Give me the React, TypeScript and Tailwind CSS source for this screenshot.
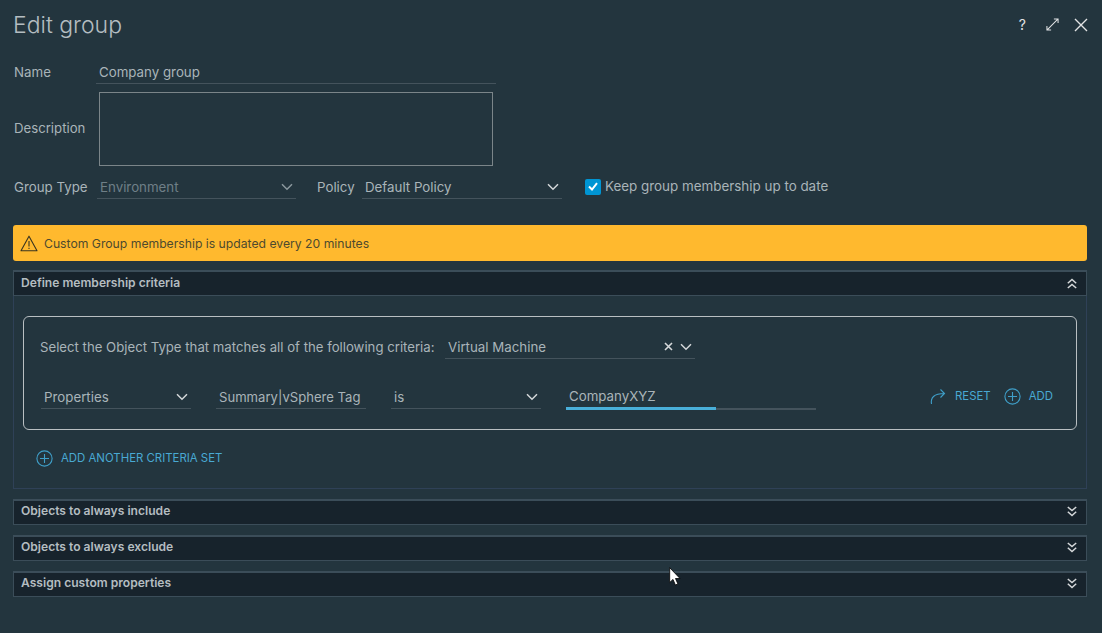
import React from "react";

const font = { fontFamily: 'Inter, sans-serif' };

const Chevron = ({ className = "" }: { className?: string }) => (
  <svg width="12" height="8" viewBox="0 0 12 8" fill="none" stroke="currentColor" strokeWidth="1.5" className={className}>
    <path d="M1 1.2 6 6.2 11 1.2" />
  </svg>
);

const PlusCircle = () => (
  <svg width="17" height="17" viewBox="0 0 17 17" fill="none" stroke="#3f9fc9" strokeWidth="1.1" className="shrink-0">
    <circle cx="8.5" cy="8.5" r="7.6" />
    <path d="M8.5 4v9M4 8.5h9" />
  </svg>
);

const DoubleChevron = ({ up = false }: { up?: boolean }) => (
  <svg width="10" height="11" viewBox="0 0 10 11" fill="none" stroke="#d5d8da" strokeWidth="1.5" style={up ? { transform: "scaleY(-1)" } : undefined}>
    <path d="M.8 1 5 4.6 9.2 1M.8 5.8 5 9.6 9.2 5.8" />
  </svg>
);

const Select = ({ label, width, muted = false, clear = false }: { label: string; width: string; muted?: boolean; clear?: boolean }) => (
  <div className={`flex h-[22px] items-center border-b border-[#44535c] pl-[3px] pr-[3px] ${width}`}>
    <span className={`flex-1 truncate text-[13.3px] ${muted ? "text-[#6f7f87]" : "text-[#a9b4b9]"}`}>{label}</span>
    {clear && (
      <svg width="9" height="9" viewBox="0 0 9 9" fill="none" stroke="#d5d8da" strokeWidth="1.6" className="mb-[2px] mr-[7px]">
        <path d="M1 1 8 8M8 1 1 8" />
      </svg>
    )}
    <Chevron className={`mb-[2px] ${muted ? "text-[#8b989e]" : "text-[#d5d8da]"}`} />
  </div>
);

const SectionHeader = ({ title, up = false }: { title: string; up?: boolean }) => (
  <div className={`flex h-[26px] items-center justify-between border border-t-2 border-[#3b4d59] bg-[#17232c] pl-[7px] pr-[9px] ${up ? "pb-0" : "pb-[2px]"}`}>
    <span className="text-[12.1px] font-semibold text-[#b4bdc1]">{title}</span>
    <DoubleChevron up={up} />
  </div>
);

export default function App() {
  return (
    <div style={font} className="relative h-[633px] w-[1102px] overflow-hidden bg-[#23353e] pl-[13px] pr-[15px] text-[#a9b4b9]">
      {/* title bar */}
      <div className="flex h-[50px] items-center justify-between">
        <h1 className="text-[23px] font-light text-[#b4bdc1]">Edit group</h1>
        <div className="mr-[-1px] flex items-center text-[#e2e4e5]">
          <span className="mb-[1px] text-[14px] leading-none">?</span>
          <svg width="13" height="13" viewBox="0 0 14 14" fill="none" stroke="currentColor" strokeWidth="1.1" className="ml-[20px] mb-[1px]">
            <path d="M1 13 13 1M8.5 1H13V5.5M1 8.5V13H5.5" />
          </svg>
          <svg width="14" height="14" viewBox="0 0 14 14" fill="none" stroke="currentColor" strokeWidth="1.4" className="ml-[15px]">
            <path d="M1 1 13 13M13 1 1 13" />
          </svg>
        </div>
      </div>

      {/* name */}
      <div className="mt-[12px] flex h-[22px] items-center">
        <label className="w-[83px] pl-[1px] text-[13.3px]">Name</label>
        <div className="flex h-[22px] w-[400px] items-center border-b border-[#44535c] pl-[3px] text-[13.3px]">Company group</div>
      </div>

      {/* description */}
      <div className="mt-[8px] flex h-[74px] items-center">
        <label className="w-[86px] pl-[1px] text-[13.2px]">Description</label>
        <div className="h-[74px] w-[394px] border border-[#7b8589]" />
      </div>

      {/* type + policy */}
      <div className="mt-[11px] flex h-[22px] items-center">
        <label className="w-[84px] pl-[1px] text-[13.3px]">Group Type</label>
        <Select label="Environment" width="w-[199px]" muted />
        <label className="ml-[21px] w-[45px] text-[13.3px]">Policy</label>
        <Select label="Default Policy" width="w-[200px]" />
        <div className="ml-[23px] flex items-center gap-[4px] pb-[3px]">
          <span className="flex h-[16px] w-[16px] items-center justify-center rounded-[2px] bg-[#0095d3]">
            <svg width="10" height="9" viewBox="0 0 10 9" fill="none" stroke="#fff" strokeWidth="2">
              <path d="M1 4.5 4 7.5 9 1.2" />
            </svg>
          </span>
          <span className="text-[13.4px]">Keep group membership up to date</span>
        </div>
      </div>

      {/* alert */}
      <div className="mt-[26px] flex h-[36px] items-center gap-[6px] rounded-[3px] bg-[#ffb92e] pl-[7px] text-[12.2px] text-[#4d4a2e]">
        <svg width="18" height="17" viewBox="0 0 18 17" fill="none" stroke="#3a3520" strokeWidth="1.1">
          <path d="M9 1.2 17 15.8H1Z" strokeLinejoin="round" />
          <path d="M9 6v5.5M9 12.8v1.2" />
        </svg>
        <span className="mt-[2px]">Custom Group membership is updated every 20 minutes</span>
      </div>

      {/* membership criteria */}
      <div className="mt-[9px]">
        <SectionHeader title="Define membership criteria" up />
        <div className="h-[193px] border border-t-0 border-[#2f4157] px-[9px] pt-[20px]">
          <div className="flex h-[114px] flex-col rounded-[6px] border border-[#b9bfc2] pl-[16px] pr-[23px]">
            <div className="mt-[20px] flex h-[22px] items-center">
              <span className="w-[405px] text-[13.2px]">Select the Object Type that matches all of the following criteria:</span>
              <Select label="Virtual Machine" width="w-[250px]" clear />
            </div>
            <div className="mt-[28px] flex items-start">
              <div className="ml-[1px]">
                <Select label="Properties" width="w-[150px]" />
              </div>
              <div className="ml-[25px] flex h-[22px] w-[150px] items-center border-b border-[#44535c] pl-[3px] text-[13.1px]">Summary|vSphere Tag</div>
              <div className="ml-[25px]">
                <Select label="is" width="w-[150px]" />
              </div>
              <div className="relative ml-[25px] flex h-[23px] w-[250px] items-center border-b-2 border-[#44535c] pb-[1px] pl-[3px] text-[13.3px]">
                CompanyXYZ
                <span className="absolute bottom-[-2px] left-0 h-[3px] w-[150px] bg-[#49afd9]" />
              </div>
              <div className="ml-auto mb-[3px] flex items-center self-center text-[11.4px] text-[#49a9d3]">
                <svg width="16" height="17" viewBox="0 0 16 17" fill="none" stroke="#3f9fc9" strokeWidth="1.1">
                  <path d="M1.5 16C.5 10 3.5 5.5 14.5 5.5M10.5 1.5l4 4-4 4" />
                </svg>
                <span className="ml-[9px]">RESET</span>
                <span className="ml-[13px]"><PlusCircle /></span>
                <span className="ml-[8px]">ADD</span>
              </div>
            </div>
          </div>
          <div className="mt-[20px] flex items-center gap-[8px] pl-[13px] text-[11.4px] text-[#49a9d3]">
            <PlusCircle />
            <span>ADD ANOTHER CRITERIA SET</span>
          </div>
        </div>
      </div>

      <div className="mt-[10px] flex flex-col gap-[10px]">
        <SectionHeader title="Objects to always include" />
        <SectionHeader title="Objects to always exclude" />
        <SectionHeader title="Assign custom properties" />
      </div>

      {/* mouse pointer */}
      <svg width="13" height="19" viewBox="0 0 13 19" className="absolute left-[669px] top-[567px]">
        <path d="M.7.7V15.5L4 12.4 6.4 18l2.5-1.1L6.5 11.5H11Z" fill="#fff" stroke="#000" strokeWidth=".8" />
      </svg>
    </div>
  );
}
